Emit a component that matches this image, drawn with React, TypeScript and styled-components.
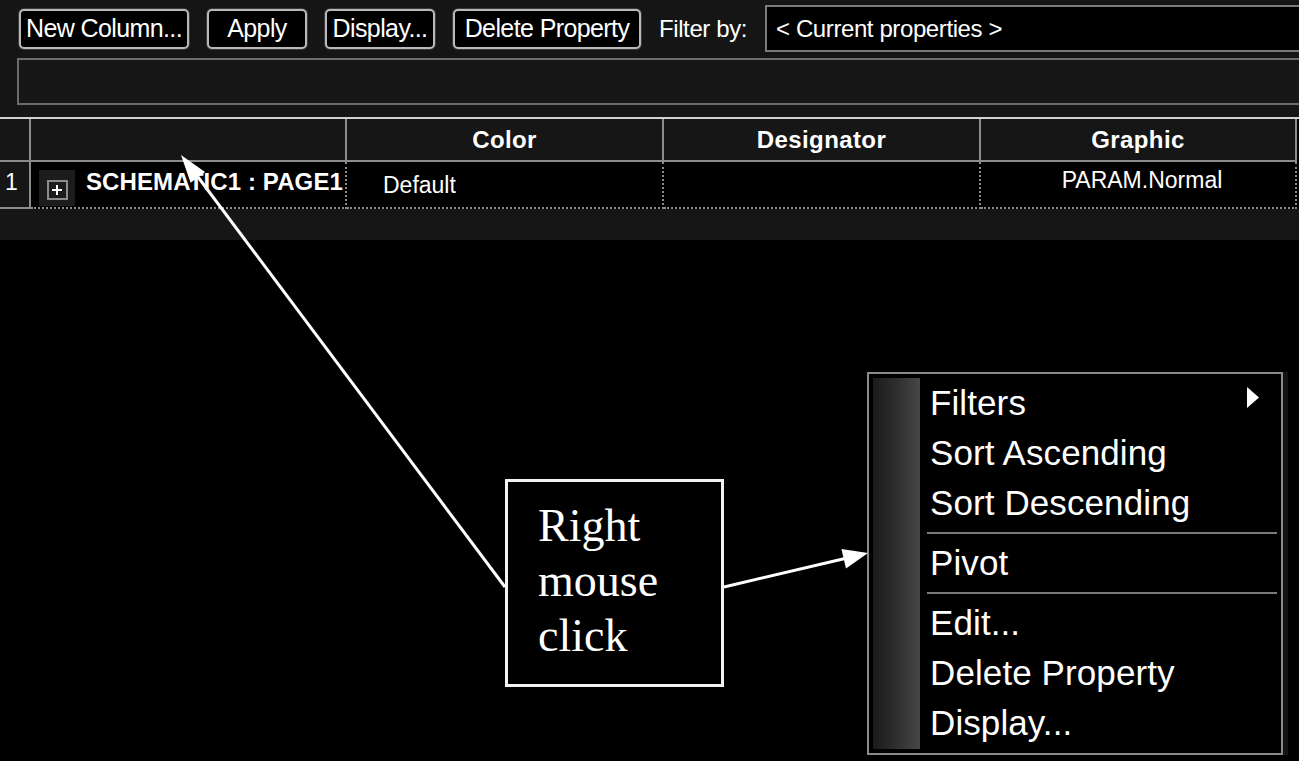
import { FC } from "react";
import styled, { createGlobalStyle } from "styled-components";

const GlobalStyle = createGlobalStyle`
    html, body {
        margin: 0;
        padding: 0;
        background: #000;
    }
    body {
        font-family: "Liberation Sans", Arial, sans-serif;
        color: #fff;
    }
`;

const toolButtons = [
    { label: "New Column...", width: 170 },
    { label: "Apply", width: 100 },
    { label: "Display...", width: 110 },
    { label: "Delete Property", width: 188 },
];

// first two headers are the row number column and the tree column
const columns = ["", "", "Color", "Designator", "Graphic"];

type MenuEntry = { label: string; sub?: boolean } | "sep";

const menuEntries: MenuEntry[] = [
    { label: "Filters", sub: true },
    { label: "Sort Ascending" },
    { label: "Sort Descending" },
    "sep",
    { label: "Pivot" },
    "sep",
    { label: "Edit..." },
    { label: "Delete Property" },
    { label: "Display..." },
];

const Arrows: FC = () => (
    <ArrowLayer viewBox="0 0 1299 761" width={1299} height={761}>
        <line x1={505} y1={587} x2={198} y2={177} stroke="#fff" strokeWidth={3} />
        <polygon points="181,155 205,172 190.6,182.8" fill="#fff" />
        <line x1={724} y1={587} x2={845} y2={558.5} stroke="#fff" strokeWidth={3} />
        <polygon points="868,553 846,568.5 841.4,549" fill="#fff" />
    </ArrowLayer>
);

const ContextMenu: FC = () => (
    <Menu>
        <Strip />
        <Items>
            {menuEntries.map((entry, i) =>
                entry === "sep" ? (
                    <Separator key={i} />
                ) : (
                    <MenuItem key={i}>
                        {entry.label}
                        {entry.sub && (
                            <SubArrow viewBox="0 0 12 21" width={12} height={21}>
                                <polygon points="0,0 12,10.5 0,21" fill="#fff" />
                            </SubArrow>
                        )}
                    </MenuItem>
                )
            )}
        </Items>
    </Menu>
);

export default function App() {
    return (
        <Page>
            <GlobalStyle />
            <Toolbar>
                <ButtonRow>
                    {toolButtons.map((b) => (
                        <ToolButton key={b.label} $w={b.width}>
                            {b.label}
                        </ToolButton>
                    ))}
                    <FilterLabel>Filter by:</FilterLabel>
                    <FilterBox>&lt; Current properties &gt;</FilterBox>
                </ButtonRow>
                <InfoBox />
            </Toolbar>

            <Grid>
                {columns.map((c, i) => (
                    <HeadCell key={i}>{c}</HeadCell>
                ))}
                <RowNum>1</RowNum>
                <DataCell $top={6}>
                    <Expand>
                        <ExpandBox>
                            <svg viewBox="0 0 12 12" width={12} height={12}>
                                <path d="M6 1v10M1 6h10" stroke="#fff" strokeWidth={2} />
                            </svg>
                        </ExpandBox>
                    </Expand>
                    <NodeName>SCHEMATIC1 : PAGE1</NodeName>
                </DataCell>
                <DataCell $top={10} $padLeft={36}>
                    Default
                </DataCell>
                <DataCell $top={6} />
                <DataCell $top={5} $center>
                    PARAM.Normal
                </DataCell>
            </Grid>
            <FooterStrip />

            <ContextMenu />

            <Callout>Right mouse click</Callout>

            <Arrows />
        </Page>
    );
}

const Page = styled.div`
    position: relative;
    width: 1299px;
    height: 761px;
    overflow: hidden;
    background: #000;
`;

const Toolbar = styled.div`
    height: 117px;
    box-sizing: border-box;
    padding-left: 17px;
    background: #151515;
    display: flex;
    flex-direction: column;
`;

const ButtonRow = styled.div`
    height: 57px;
    padding-left: 2px;
    display: flex;
    align-items: center;
    gap: 18px;
`;

const ToolButton = styled.button<{ $w: number }>`
    width: ${(p) => p.$w}px;
    height: 40px;
    padding: 0;
    background: #000;
    color: #fff;
    border: 2px solid #b9b9b9;
    border-radius: 5px;
    box-shadow: 0 0 0 1px #3a3a3a;
    font-family: "Liberation Sans", Arial, sans-serif;
    font-size: 25px;
    letter-spacing: -0.6px;
    white-space: nowrap;
    cursor: pointer;
`;

const FilterLabel = styled.span`
    font-size: 24px;
    letter-spacing: -0.4px;
    white-space: nowrap;
`;

const FilterBox = styled.div`
    flex: 1;
    height: 47px;
    margin-right: -6px;
    box-sizing: border-box;
    padding-left: 9px;
    display: flex;
    align-items: center;
    background: #000;
    border: 2px solid #7a7a7a;
    font-size: 24px;
    letter-spacing: -0.4px;
`;

const InfoBox = styled.div`
    height: 47px;
    margin-top: 1px;
    margin-right: -6px;
    box-sizing: border-box;
    background: #171717;
    border: 2px solid #6c6c6c;
`;

const Grid = styled.div`
    display: grid;
    grid-template-columns: 31px 316px 317px 317px 316px;
    border-top: 2px solid #d2d2d2;
    background: #000;
`;

const HeadCell = styled.div`
    height: 43px;
    box-sizing: border-box;
    display: flex;
    align-items: center;
    justify-content: center;
    background: #161616;
    border-right: 2px solid #8c8c8c;
    border-bottom: 2px solid #8c8c8c;
    font-size: 24px;
    font-weight: bold;
    letter-spacing: 0.4px;
`;

const RowNum = styled.div`
    height: 47px;
    box-sizing: border-box;
    padding: 7px 0 0 5px;
    background: #161616;
    border-right: 2px solid #8c8c8c;
    border-bottom: 2px solid #8c8c8c;
    font-size: 23px;
    line-height: 27px;
`;

const DataCell = styled.div<{ $top: number; $padLeft?: number; $center?: boolean }>`
    height: 47px;
    box-sizing: border-box;
    padding-top: ${(p) => p.$top}px;
    padding-left: ${(p) => p.$padLeft ?? 8}px;
    display: flex;
    align-items: flex-start;
    justify-content: ${(p) => (p.$center ? "center" : "flex-start")};
    gap: 11px;
    border-right: 2px dotted #8c8c8c;
    border-bottom: 2px dotted #8c8c8c;
    font-size: 23px;
    line-height: 27px;
    white-space: nowrap;
`;

const Expand = styled.div`
    width: 36px;
    height: 36px;
    margin-top: 2px;
    display: flex;
    align-items: center;
    justify-content: center;
    background: #1c1c1c;
`;

const ExpandBox = styled.div`
    width: 21px;
    height: 20px;
    margin-top: 4px;
    box-sizing: border-box;
    display: flex;
    align-items: center;
    justify-content: center;
    border: 2px solid #8c8c8c;
`;

const NodeName = styled.span`
    font-size: 24px;
    font-weight: bold;
    letter-spacing: 0.1px;
`;

const FooterStrip = styled.div`
    height: 31px;
    background: #161616;
`;

const Menu = styled.div`
    position: absolute;
    left: 867px;
    top: 372px;
    width: 416px;
    height: 383px;
    box-sizing: border-box;
    padding: 4px;
    display: flex;
    background: #000;
    border: 2px solid #8a8a8a;
    box-shadow: 5px 0 0 #141414;
`;

const Strip = styled.div`
    width: 47px;
    background: linear-gradient(90deg, #1b1b1b 0%, #2c2c2c 45%, #474747 100%);
`;

const Items = styled.div`
    flex: 1;
    display: flex;
    flex-direction: column;
`;

const MenuItem = styled.div`
    height: 50px;
    padding: 0 18px 0 10px;
    display: flex;
    font-size: 35px;
    line-height: 50px;
    letter-spacing: 0.1px;
    white-space: nowrap;
`;

const SubArrow = styled.svg`
    margin-left: auto;
    margin-top: 9px;
`;

const Separator = styled.div`
    height: 2px;
    margin: 4px 0 4px 7px;
    background: #7a7a7a;
`;

const Callout = styled.div`
    position: absolute;
    left: 505px;
    top: 479px;
    width: 219px;
    height: 208px;
    box-sizing: border-box;
    padding: 16px 0 0 30px;
    background: #000;
    border: 3px solid #f2f2f2;
    font-family: "Liberation Serif", "Times New Roman", serif;
    font-size: 46px;
    line-height: 55px;
`;

const ArrowLayer = styled.svg`
    position: absolute;
    left: 0;
    top: 0;
    pointer-events: none;
`;
